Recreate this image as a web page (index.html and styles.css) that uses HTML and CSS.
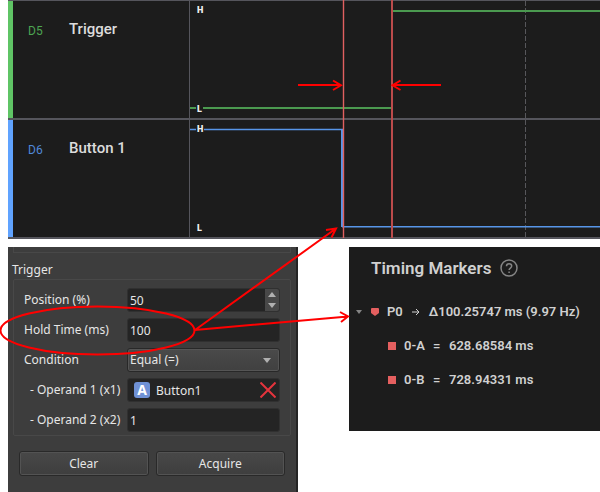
FILE: index.html
```
<!DOCTYPE html>
<html lang="en">
<head>
<meta charset="utf-8">
<title>Trigger hold time</title>
<link rel="stylesheet" href="styles.css">
</head>
<body>
<main class="page">
  <section class="channels">
    <div class="channel channel-green">
      <div class="channel-label"><span class="channel-id">D5</span><span class="channel-name">Trigger</span></div>
      <div class="plot">
        <svg class="wave" viewBox="0 0 410 117" preserveAspectRatio="none">
          <path class="grid-line" d="M335.500 0V117"/>
          <path class="trace-green" d="M0 107H202"/>
          <path class="trace-green" d="M202 10H410"/>
        </svg>
        <span class="level level-high">H</span><span class="level level-low">L</span>
      </div>
    </div>
    <div class="channel channel-blue">
      <div class="channel-label"><span class="channel-id">D6</span><span class="channel-name">Button 1</span></div>
      <div class="plot">
        <svg class="wave" viewBox="0 0 410 117" preserveAspectRatio="none">
          <path class="grid-line" d="M335.500 0V117"/>
          <path class="trace-blue thin" d="M0 9.500H153"/>
          <path class="trace-blue" d="M152 9V107"/>
          <path class="trace-blue thin" d="M152 106.700H410"/>
        </svg>
        <span class="level level-high">H</span><span class="level level-low">L</span>
      </div>
    </div>
  </section>

  <div class="panels">
    <form class="settings">
      <div class="previous-group"></div>
      <h2 class="group-title">Trigger</h2>
      <div class="group">
        <label for="position">Position (%)</label>
        <div class="field">
          <input id="position" type="text" value="50">
          <div class="spinner">
            <button type="button" aria-label="Increase"><svg width="8" height="5" viewBox="0 0 8 5"><path d="M4 0L8 5H0z"/></svg></button>
            <button type="button" aria-label="Decrease"><svg width="8" height="5" viewBox="0 0 8 5"><path d="M0 0H8L4 5z"/></svg></button>
          </div>
        </div>
        <label for="hold">Hold Time (ms)</label>
        <div class="field"><input id="hold" type="text" value="100"></div>
        <label for="condition">Condition</label>
        <div class="field field-select">
          <select id="condition"><option>Equal (=)</option></select>
          <svg class="caret" width="8" height="5" viewBox="0 0 8 5"><path d="M0 0H8L4 5z"/></svg>
        </div>
        <label class="operand" for="operand1">- Operand 1 (x1)</label>
        <div class="field">
          <span class="variable">A</span>
          <input id="operand1" type="text" value="Button1">
          <button class="remove" type="button" aria-label="Remove"><svg width="16" height="16" viewBox="0 0 16 16"><path d="M0.500 0.500L15.500 15.500M15.500 0.500L0.500 15.500"/></svg></button>
        </div>
        <label class="operand" for="operand2">- Operand 2 (x2)</label>
        <div class="field"><input id="operand2" type="text" value="1"></div>
      </div>
      <div class="actions">
        <button class="action" type="button">Clear</button>
        <button class="action" type="button">Acquire</button>
      </div>
    </form>

    <section class="markers">
      <h2 class="markers-title">Timing Markers
        <svg width="18" height="18" viewBox="0 0 18 18"><circle cx="9" cy="9" r="8"/><path d="M6.500 7.200C6.500 3.800 11.700 3.900 11.700 7.100C11.700 9 9.100 9.100 9.100 11M9.100 12.500V14"/></svg>
      </h2>
      <div class="marker-pair">
        <svg class="fold" width="6" height="4" viewBox="0 0 6 4"><path d="M0 0H6L3 4z"/></svg>
        <svg class="pin" width="8" height="8" viewBox="0 0 8 8"><path d="M1 0H7Q8 0 8 1V5L4 8L0 5V1Q0 0 1 0z"/></svg>
        <span>P0</span>
        <svg class="arrow" width="8" height="8" viewBox="0 0 8 8"><path d="M0 4H7M4 1L7 4L4 7"/></svg>
        <span>Δ100.25747 ms (9.97 Hz)</span>
      </div>
      <div class="marker"><i class="swatch"></i><span class="marker-name">0-A</span><span class="equals">=</span><span>628.68584 ms</span></div>
      <div class="marker"><i class="swatch"></i><span class="marker-name">0-B</span><span class="equals">=</span><span>728.94331 ms</span></div>
    </section>
  </div>

  <svg class="annotations" viewBox="0 0 600 492" preserveAspectRatio="xMinYMin meet">
    <path class="cursor thin" d="M343.500 0V238"/>
    <path class="cursor" d="M392 0V238"/>
    <path d="M298 85H341M333 80.500L341 85.300L333 90M441 85H393M400.500 80.500L392.500 85.300L400.500 90"/>
    <ellipse cx="97.500" cy="330.500" rx="97" ry="24"/>
    <path d="M195 330L336 228.500M326 230L336 228.500L331.500 237.500M195 330L348 316.500M340 312L348 316.500L341 322"/>
  </svg>
</main>
</body>
</html>
```
FILE: styles.css
```
* { box-sizing: border-box; }
body { margin: 0; background: #fff; }
button, input, select { font: inherit; color: inherit; margin: 0; padding: 0; border: 0; background: none; }
.page { position: relative; padding-left: 8px; }

.channels { border-top: 1px solid #55555c; font-family: Roboto, sans-serif; }
.channel { display: grid; grid-template-columns: 182px 1fr; height: 119px; background: #1c1c1c; border-bottom: 2px solid #55555c; }
.channel-label { display: flex; align-items: flex-start; padding: 18px 0 0 15px; border-right: 1px solid #55555c; border-left: 5px solid; }
.channel-green .channel-label { border-left-color: #5fc465; }
.channel-blue .channel-label { border-left-color: #60a3ff; }
.channel-id { width: 41px; font-size: 12px; line-height: 24px; }
.channel-green .channel-id { color: #4da552; }
.channel-blue .channel-id { color: #5088d8; }
.channel-name { font-size: 15px; line-height: 20px; font-weight: 500; color: #dcdcdc; }
.plot { position: relative; }
.wave { display: block; width: 100%; height: 100%; fill: none; stroke-width: 2; }
.wave path { vector-effect: non-scaling-stroke; }
.wave .thin { stroke-width: 1.400; }
.trace-green { stroke: #4b9a50; }
.trace-blue { stroke: #5795e8; }
.grid-line { stroke: #57575b; stroke-width: 1; stroke-dasharray: 5 2; }
.level { position: absolute; left: 6px; padding: 0 1px; background: #1c1c1c; font-size: 9px; line-height: 10px; font-weight: 900; color: #eee; }
.level-high { top: 4px; }
.level-low { bottom: 4px; }

.panels { display: grid; grid-template-columns: 290fr 251fr; gap: 51px; align-items: start; padding-top: 8px; }
.settings { min-width: 0; padding: 0 5px 16px 5px; background: #3d3d3d; border-right: 2px solid #252525; color: #e6e6e6; font: 12px/16px "Noto Sans", sans-serif; }
.previous-group { height: 6px; border: 1px solid #484848; border-top: 0; }
.group-title { margin: 9px 0 1px -1px; font-size: 12px; line-height: 16px; font-weight: 400; }
.group { display: grid; grid-template-columns: 103px 1fr; grid-auto-rows: 24px; gap: 6px 0; align-items: center; padding: 8px 10px 3px 10px; border: 1px solid #484848; border-radius: 2px; }
.operand { padding-left: 6px; white-space: nowrap; }
.field { display: flex; align-items: center; height: 24px; padding-left: 2px; overflow: hidden; background: #242424; border: 1px solid #303030; border-radius: 3px; }
.field input { flex: 1; width: 0; min-width: 0; height: 22px; outline: 0; }
.spinner { display: flex; flex-direction: column; width: 14px; height: 22px; background: #484848; }
.spinner button { display: flex; align-items: center; justify-content: center; flex: 1; }
.spinner svg, .caret { fill: #b0b0b0; }
.field-select { position: relative; padding: 0; background: linear-gradient(#4a4a4a, #404040); border-color: #282828; box-shadow: inset 0 0 0 1px #555; }
.field-select select { width: 100%; height: 22px; padding-left: 2px; appearance: none; }
.caret { position: absolute; right: 8px; top: 9px; pointer-events: none; }
.variable { width: 16px; height: 16px; margin: 0 6px 0 4px; border-radius: 3px; background: #6f91d5; color: #fff; font-weight: 700; font-size: 14px; line-height: 16px; text-align: center; }
.remove { display: flex; margin-right: 3px; }
.remove svg { fill: none; stroke: #e4343d; stroke-width: 2; }
.actions { display: grid; grid-template-columns: 1fr 1fr; gap: 7px; padding: 15px 6px 0; }
.action { height: 25px; border: 1px solid #292929; border-radius: 3px; background: linear-gradient(#484848, #3e3e3e); box-shadow: inset 0 0 0 1px #535353; }

.markers { min-width: 0; height: 184px; padding: 10px 0 0 7px; background: #1c1c1c; color: #d0d0d0; font: 600 13px/20px Roboto, sans-serif; white-space: nowrap; }
.markers-title { display: flex; align-items: center; gap: 9px; margin: 0 0 24px 15px; font-size: 17px; line-height: 22px; font-weight: 600; }
.markers-title svg { fill: none; stroke: #858585; stroke-width: 1.500; }
.marker-pair { display: flex; align-items: center; margin-bottom: 15px; line-height: 18px; }
.fold { margin-right: 9px; fill: #858585; }
.pin { margin-right: 8px; fill: #e45f5f; }
.arrow { margin: 0 9px; fill: none; stroke: #d0d0d0; }
.marker { display: flex; align-items: center; margin-bottom: 14px; padding-left: 32px; }
.swatch { width: 8px; height: 8px; margin-right: 8px; background: #e45f5f; }
.marker-name { width: 29px; }
.equals { width: 16px; }

.annotations { position: absolute; top: 0; left: 0; width: 100%; height: auto; fill: none; stroke: #f00; stroke-width: 2; pointer-events: none; }
.cursor { stroke: #bb4b4b; }
.cursor.thin { stroke: #e06060; stroke-width: 1.400; }
```
